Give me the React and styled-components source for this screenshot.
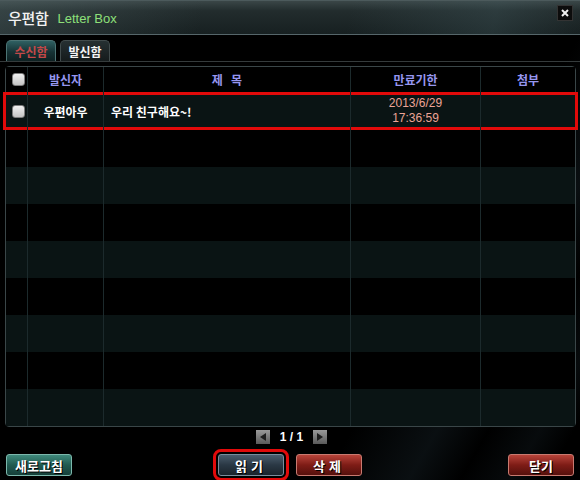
import styled, { createGlobalStyle, css } from "styled-components"

const GlobalStyle = createGlobalStyle`
  html, body {
    margin: 0;
    padding: 0;
    background: #000;
  }
  body {
    font-family: "Noto Sans CJK KR", "Noto Sans", sans-serif;
  }
`

const Window = styled.div`
  width: 580px;
  height: 480px;
  background:
    linear-gradient(120deg, transparent 70%, rgba(40, 60, 70, 0.25) 80%, transparent 86%, rgba(40, 60, 70, 0.18) 92%, transparent 96%),
    #000;
  display: flex;
  flex-direction: column;
  overflow: hidden;
`

const TitleBar = styled.div`
  height: 35px;
  box-sizing: border-box;
  display: flex;
  align-items: center;
  padding: 0 7px 1px 8px;
  background:
    linear-gradient(100deg, rgba(90, 110, 112, 0.35) 0%, transparent 35%, transparent 60%, rgba(70, 95, 100, 0.3) 85%, transparent 100%),
    linear-gradient(180deg, #3a4647 0%, #222c2d 30%, #172021 100%);
  border-bottom: 1px solid #56666a;
  border-top: 1px solid #4c5a5c;
`

const Title = styled.span`
  color: #f2f2f2;
  font-size: 15px;
  font-weight: 500;
  letter-spacing: -0.3px;
`

const SubTitle = styled.span`
  color: #8ee07a;
  font-family: "Liberation Sans", "Noto Sans", sans-serif;
  font-size: 13px;
  margin: 3px 0 0 9px;
`

const CloseButton = styled.div`
  margin-left: auto;
  margin-top: -9px;
  width: 14px;
  height: 14px;
  background: #0c0c0c;
  border: 1px solid #333;
  display: flex;
  align-items: center;
  justify-content: center;
`

const Tabs = styled.div`
  margin-top: 5px;
  display: flex;
  gap: 4px;
  padding-left: 6px;
  border-bottom: 1px solid #353b3c;
`

const Tab = styled.div`
  width: 50px;
  height: 21px;
  box-sizing: border-box;
  border: 1px solid #414b4c;
  border-bottom: none;
  border-radius: 5px 5px 0 0;
  display: flex;
  align-items: center;
  justify-content: center;
  font-size: 12px;
  font-weight: 700;
  ${(p) =>
    p.$active
      ? css`
          background: linear-gradient(180deg, #2f6062 0%, #163234 55%, #0e2122 100%);
          color: #c44848;
          border-color: #4c7474;
        `
      : css`
          background: linear-gradient(180deg, #263032 0%, #151b1c 100%);
          color: #f4f4f4;
        `}
`

const Table = styled.div`
  margin: 4px 4px 0 5px;
  border: 1px solid #3a4648;
  border-radius: 4px;
`

const Row = styled.div`
  display: grid;
  grid-template-columns: 21px 76px 247px 130px 95px;
  height: ${(p) => p.$height}px;
  background: ${(p) => (p.$striped ? "#0a1414" : "#000")};
  ${(p) =>
    p.$marked &&
    css`
      box-shadow: inset 0 3px 0 #e20a0a, inset 0 -3px 0 #e20a0a, -3px 0 0 #e20a0a, 3px 0 0 #e20a0a;
      position: relative;
    `}
`

const Cell = styled.div`
  display: flex;
  flex-direction: column;
  align-items: ${(p) => p.$align || "center"};
  justify-content: center;
  padding-left: ${(p) => p.$pad || 0}px;
  border-left: ${(p) => (p.$first ? "none" : "1px solid #1c2a2c")};
  font-size: 12px;
  line-height: 15px;
`

const HeadText = styled.span`
  color: #9696f0;
  font-weight: 700;
  white-space: pre;
`

const NameText = styled.span`
  color: #fff;
  font-weight: 700;
`

const DateText = styled.span`
  color: #eca496;
  font-family: "Liberation Sans", "Noto Sans", sans-serif;
  font-size: 12px;
`

const CheckBox = styled.div`
  width: 11px;
  height: 11px;
  margin-left: 4px;
  border-radius: 3px;
  background: linear-gradient(180deg, #f0f0f0, #c4c4c4);
  border: 1px solid #7c7c7c;
`

const Pager = styled.div`
  height: 20px;
  display: flex;
  align-items: center;
  justify-content: center;
  gap: 10px;
  margin-left: 3px;
`

const PageArrow = styled.div`
  width: 14px;
  height: 14px;
  background: linear-gradient(180deg, #9a9a9a, #5a5a5a);
  display: flex;
  align-items: center;
  justify-content: center;
`

const PageText = styled.span`
  color: #fff;
  font-family: "Liberation Sans", sans-serif;
  font-weight: 700;
  font-size: 12px;
`

const Footer = styled.div`
  margin-top: 7px;
  padding: 0 6px;
  display: flex;
  align-items: center;
`

const buttonColors = {
  green: ["#3f8a7c", "#215a50", "#16403a", "#7cb8ac"],
  blue: ["#4a5c6c", "#2a3844", "#1a242c", "#7a8c9c"],
  red: ["#b8443a", "#7e1c16", "#55100c", "#c87a70"],
}

const Button = styled.div`
  width: 66px;
  height: 22px;
  box-sizing: border-box;
  border-radius: 3px;
  border: 1px solid ${(p) => buttonColors[p.$tone][3]};
  background: linear-gradient(
    180deg,
    ${(p) => buttonColors[p.$tone][0]} 0%,
    ${(p) => buttonColors[p.$tone][1]} 50%,
    ${(p) => buttonColors[p.$tone][2]} 100%
  );
  display: flex;
  align-items: center;
  justify-content: center;
  color: #fff;
  font-size: 13px;
  font-weight: 700;
  text-shadow: 1px 1px 0 #000;
  letter-spacing: ${(p) => p.$spread || 0}px;
  margin-left: ${(p) => p.$gap || 0}px;
  ${(p) =>
    p.$marked &&
    css`
      outline: 3px solid #e20a0a;
      outline-offset: 2px;
    `}
`

const rows = [
  { name: "우편아우", subject: "우리 친구해요~!", date: "2013/6/29", time: "17:36:59" },
  null,
  null,
  null,
  null,
  null,
  null,
  null,
  null,
]

function App() {
  return (
    <>
      <GlobalStyle />
      <Window>
        <TitleBar>
          <Title>우편함</Title>
          <SubTitle>Letter Box</SubTitle>
          <CloseButton>
            <svg width="8" height="8" viewBox="0 0 8 8">
              <path d="M1 1 L7 7 M7 1 L1 7" stroke="#f0f0f0" strokeWidth="2" />
            </svg>
          </CloseButton>
        </TitleBar>

        <Tabs>
          <Tab $active>수신함</Tab>
          <Tab>발신함</Tab>
        </Tabs>

        <Table>
          <Row $height={25}>
            <Cell $first>
              <CheckBox />
            </Cell>
            <Cell><HeadText>발신자</HeadText></Cell>
            <Cell><HeadText>{"제   목"}</HeadText></Cell>
            <Cell><HeadText>만료기한</HeadText></Cell>
            <Cell><HeadText>첨부</HeadText></Cell>
          </Row>
          {rows.map((r, i) => (
            <Row key={i} $height={i === 0 ? 38 : 37} $striped={i % 2 === 0} $marked={i === 0}>
              <Cell $first>{r && <CheckBox />}</Cell>
              <Cell>{r && <NameText>{r.name}</NameText>}</Cell>
              <Cell $align="flex-start" $pad={7}>{r && <NameText>{r.subject}</NameText>}</Cell>
              <Cell>
                {r && (
                  <>
                    <DateText>{r.date}</DateText>
                    <DateText>{r.time}</DateText>
                  </>
                )}
              </Cell>
              <Cell />
            </Row>
          ))}
        </Table>

        <Pager>
          <PageArrow>
            <svg width="10" height="10" viewBox="0 0 10 10">
              <path d="M8 1 L2 5 L8 9 Z" fill="#1e1e1e" />
            </svg>
          </PageArrow>
          <PageText>1 / 1</PageText>
          <PageArrow>
            <svg width="10" height="10" viewBox="0 0 10 10">
              <path d="M2 1 L8 5 L2 9 Z" fill="#1e1e1e" />
            </svg>
          </PageArrow>
        </Pager>

        <Footer>
          <Button $tone="green">새로고침</Button>
          <Button $tone="blue" $gap={146} $spread={4} $marked>읽기</Button>
          <Button $tone="red" $gap={12} $spread={4}>삭제</Button>
          <Button $tone="red" $gap={146}>닫기</Button>
        </Footer>
      </Window>
    </>
  )
}

export default App
